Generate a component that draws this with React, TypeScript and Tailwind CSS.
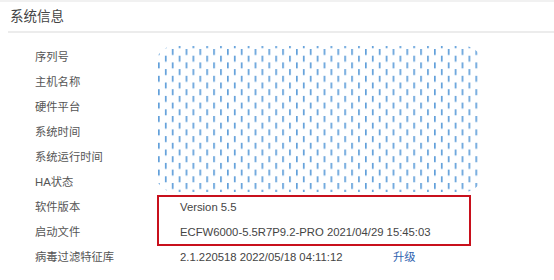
import React from "react";

const rows: { label: string; value?: React.ReactNode }[] = [
  { label: "序列号" },
  { label: "主机名称" },
  { label: "硬件平台" },
  { label: "系统时间" },
  { label: "系统运行时间" },
  { label: "HA状态" },
  { label: "软件版本", value: "Version 5.5" },
  { label: "启动文件", value: "ECFW6000-5.5R7P9.2-PRO 2021/04/29 15:45:03" },
  {
    label: "病毒过滤特征库",
    value: (
      <span className="flex">
        <span className="w-[213px]">2.1.220518 2022/05/18 04:11:12</span>
        <span className="text-[#2f63b0]">升级</span>
      </span>
    ),
  },
];

export default function App() {
  return (
    <div
      className="relative w-[554px] h-[280px] bg-white overflow-hidden"
      style={{ fontFamily: '"Liberation Sans", "Noto Sans CJK SC", sans-serif' }}
    >
      <div className="h-[2px] bg-[#f1f1f1]" />
      <div className="ml-[8px] h-[31px] border-b-2 border-[#ececec] flex items-center pl-[2px] pt-[1px] text-[13.5px] text-[#444]">
        系统信息
      </div>
      <div className="pt-[12px]">
        {rows.map((r) => (
          <div key={r.label} className="flex items-center h-[25px] text-[11.3px]">
            <div className="w-[180px] pl-[35px] text-[#555]">{r.label}</div>
            <div className="text-[#444]">{r.value}</div>
          </div>
        ))}
      </div>

      {/* redaction overlay */}
      <svg
        className="absolute left-[156px] top-[46px]"
        width="326"
        height="146"
        viewBox="0 0 326 146"
      >
        <defs>
          <pattern id="dash" x="2" y="3" width="13.8" height="13.4" patternUnits="userSpaceOnUse">
            <rect x="0" y="0" width="1.7" height="6" fill="#62a0da" />
            <rect x="6.9" y="6.7" width="1.7" height="6" fill="#62a0da" />
          </pattern>
          <clipPath id="clip">
            <rect x="0" y="0" width="326" height="146" rx="18" />
          </clipPath>
        </defs>
        <rect width="326" height="146" fill="url(#dash)" clipPath="url(#clip)" />
      </svg>

      {/* annotation box */}
      <div className="absolute left-[157px] top-[195px] w-[314px] h-[51px] border-2 border-[#c8101c]" />
    </div>
  );
}
